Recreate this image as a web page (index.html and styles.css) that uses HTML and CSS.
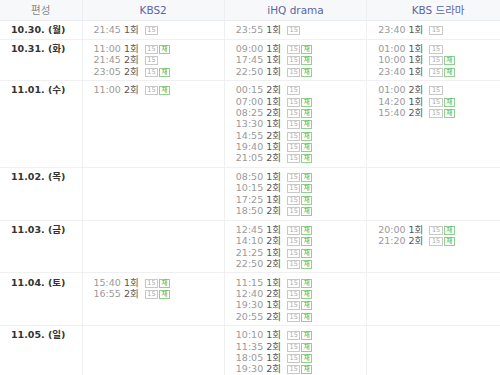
FILE: index.html
```
<!DOCTYPE html>
<html lang="ko">
<head>
<meta charset="utf-8">
<link rel="stylesheet" href="styles.css">
</head>
<body>
<div class="wrap">
<table class="sched">
  <colgroup><col class="c-date"><col><col><col></colgroup>
  <thead>
    <tr><th class="h-date">편성</th><th>KBS2</th><th>iHQ drama</th><th>KBS 드라마</th></tr>
  </thead>
  <tbody>
    <tr>
      <td class="date">10.30. (월)</td>
      <td><div class="ln"><span class="t">21:45</span> <b>1회</b> <i class="age">15</i></div></td>
      <td><div class="ln"><span class="t">23:55</span> <b>1회</b> <i class="age">15</i></div></td>
      <td><div class="ln"><span class="t">23:40</span> <b>1회</b> <i class="age">15</i></div></td>
    </tr>
    <tr>
      <td class="date">10.31. (화)</td>
      <td>
        <div class="ln"><span class="t">11:00</span> <b>1회</b> <i class="age">15</i><i class="re">재</i></div>
        <div class="ln"><span class="t">21:45</span> <b>2회</b> <i class="age">15</i></div>
        <div class="ln"><span class="t">23:05</span> <b>2회</b> <i class="age">15</i><i class="re">재</i></div>
      </td>
      <td>
        <div class="ln"><span class="t">09:00</span> <b>1회</b> <i class="age">15</i><i class="re">재</i></div>
        <div class="ln"><span class="t">17:45</span> <b>1회</b> <i class="age">15</i><i class="re">재</i></div>
        <div class="ln"><span class="t">22:50</span> <b>1회</b> <i class="age">15</i><i class="re">재</i></div>
      </td>
      <td>
        <div class="ln"><span class="t">01:00</span> <b>1회</b> <i class="age">15</i></div>
        <div class="ln"><span class="t">10:00</span> <b>1회</b> <i class="age">15</i><i class="re">재</i></div>
        <div class="ln"><span class="t">23:40</span> <b>1회</b> <i class="age">15</i><i class="re">재</i></div>
      </td>
    </tr>
    <tr>
      <td class="date">11.01. (수)</td>
      <td>
        <div class="ln"><span class="t">11:00</span> <b>2회</b> <i class="age">15</i><i class="re">재</i></div>
      </td>
      <td>
        <div class="ln"><span class="t">00:15</span> <b>2회</b> <i class="age">15</i></div>
        <div class="ln"><span class="t">07:00</span> <b>1회</b> <i class="age">15</i><i class="re">재</i></div>
        <div class="ln"><span class="t">08:25</span> <b>2회</b> <i class="age">15</i><i class="re">재</i></div>
        <div class="ln"><span class="t">13:30</span> <b>1회</b> <i class="age">15</i><i class="re">재</i></div>
        <div class="ln"><span class="t">14:55</span> <b>2회</b> <i class="age">15</i><i class="re">재</i></div>
        <div class="ln"><span class="t">19:40</span> <b>1회</b> <i class="age">15</i><i class="re">재</i></div>
        <div class="ln"><span class="t">21:05</span> <b>2회</b> <i class="age">15</i><i class="re">재</i></div>
      </td>
      <td>
        <div class="ln"><span class="t">01:00</span> <b>2회</b> <i class="age">15</i></div>
        <div class="ln"><span class="t">14:20</span> <b>1회</b> <i class="age">15</i><i class="re">재</i></div>
        <div class="ln"><span class="t">15:40</span> <b>2회</b> <i class="age">15</i><i class="re">재</i></div>
      </td>
    </tr>
    <tr>
      <td class="date">11.02. (목)</td>
      <td></td>
      <td>
        <div class="ln"><span class="t">08:50</span> <b>1회</b> <i class="age">15</i><i class="re">재</i></div>
        <div class="ln"><span class="t">10:15</span> <b>2회</b> <i class="age">15</i><i class="re">재</i></div>
        <div class="ln"><span class="t">17:25</span> <b>1회</b> <i class="age">15</i><i class="re">재</i></div>
        <div class="ln"><span class="t">18:50</span> <b>2회</b> <i class="age">15</i><i class="re">재</i></div>
      </td>
      <td></td>
    </tr>
    <tr>
      <td class="date">11.03. (금)</td>
      <td></td>
      <td>
        <div class="ln"><span class="t">12:45</span> <b>1회</b> <i class="age">15</i><i class="re">재</i></div>
        <div class="ln"><span class="t">14:10</span> <b>2회</b> <i class="age">15</i><i class="re">재</i></div>
        <div class="ln"><span class="t">21:25</span> <b>1회</b> <i class="age">15</i><i class="re">재</i></div>
        <div class="ln"><span class="t">22:50</span> <b>2회</b> <i class="age">15</i><i class="re">재</i></div>
      </td>
      <td>
        <div class="ln"><span class="t">20:00</span> <b>1회</b> <i class="age">15</i><i class="re">재</i></div>
        <div class="ln"><span class="t">21:20</span> <b>2회</b> <i class="age">15</i><i class="re">재</i></div>
      </td>
    </tr>
    <tr>
      <td class="date">11.04. (토)</td>
      <td>
        <div class="ln"><span class="t">15:40</span> <b>1회</b> <i class="age">15</i><i class="re">재</i></div>
        <div class="ln"><span class="t">16:55</span> <b>2회</b> <i class="age">15</i><i class="re">재</i></div>
      </td>
      <td>
        <div class="ln"><span class="t">11:15</span> <b>1회</b> <i class="age">15</i><i class="re">재</i></div>
        <div class="ln"><span class="t">12:40</span> <b>2회</b> <i class="age">15</i><i class="re">재</i></div>
        <div class="ln"><span class="t">19:30</span> <b>1회</b> <i class="age">15</i><i class="re">재</i></div>
        <div class="ln"><span class="t">20:55</span> <b>2회</b> <i class="age">15</i><i class="re">재</i></div>
      </td>
      <td></td>
    </tr>
    <tr>
      <td class="date">11.05. (일)</td>
      <td></td>
      <td>
        <div class="ln"><span class="t">10:10</span> <b>1회</b> <i class="age">15</i><i class="re">재</i></div>
        <div class="ln"><span class="t">11:35</span> <b>2회</b> <i class="age">15</i><i class="re">재</i></div>
        <div class="ln"><span class="t">18:05</span> <b>1회</b> <i class="age">15</i><i class="re">재</i></div>
        <div class="ln"><span class="t">19:30</span> <b>2회</b> <i class="age">15</i><i class="re">재</i></div>
      </td>
      <td></td>
    </tr>
  </tbody>
</table>
</div>
</body>
</html>
```

FILE: styles.css
```
html, body {
  margin: 0;
  padding: 0;
  background: #fff;
}
.wrap {
  width: 500px;
  height: 375px;
  overflow: hidden;
}
.sched {
  width: 509px;
  border-collapse: collapse;
  table-layout: fixed;
  font-family: "DejaVu Sans", "Noto Sans CJK KR", sans-serif;
  font-size: 9.5px;
  color: #888;
}
.c-date { width: 82px; }
.sched th {
  height: 20px;
  padding: 0;
  background: #f7f8fa;
  font-size: 10.5px;
  font-weight: normal;
  color: #5a66a6;
  text-align: center;
  line-height: 20px;
  border-bottom: 1px solid #eceef2;
  border-left: 1px solid #eceef2;
}
.sched th.h-date {
  color: #888;
  border-left: 0;
}
.sched td {
  vertical-align: top;
  padding: 3.2px 10px 3px 11px;
  line-height: 11.4px;
  border-bottom: 1px solid #f0f0f2;
  border-left: 1px solid #f0f0f2;
  white-space: nowrap;
}
.sched td.date {
  border-left: 0;
  color: #333;
  font-weight: bold;
}
.ln {
  height: 11.4px;
}
.t {
  color: #9a9a9a;
}
.ln b {
  color: #555;
  font-weight: normal;
}
.age, .re {
  display: inline-block;
  font-style: normal;
  font-size: 6.5px;
  line-height: 7px;
  height: 7px;
  padding: 0 1.5px;
  border: 1px solid #c8c8c8;
  color: #aaa;
  vertical-align: 1px;
}
.age {
  margin-left: 3px;
}
.re {
  border-color: #8fd18f;
  color: #3fae3f;
  margin-left: 1px;
  padding: 0 1.5px;
}
```
